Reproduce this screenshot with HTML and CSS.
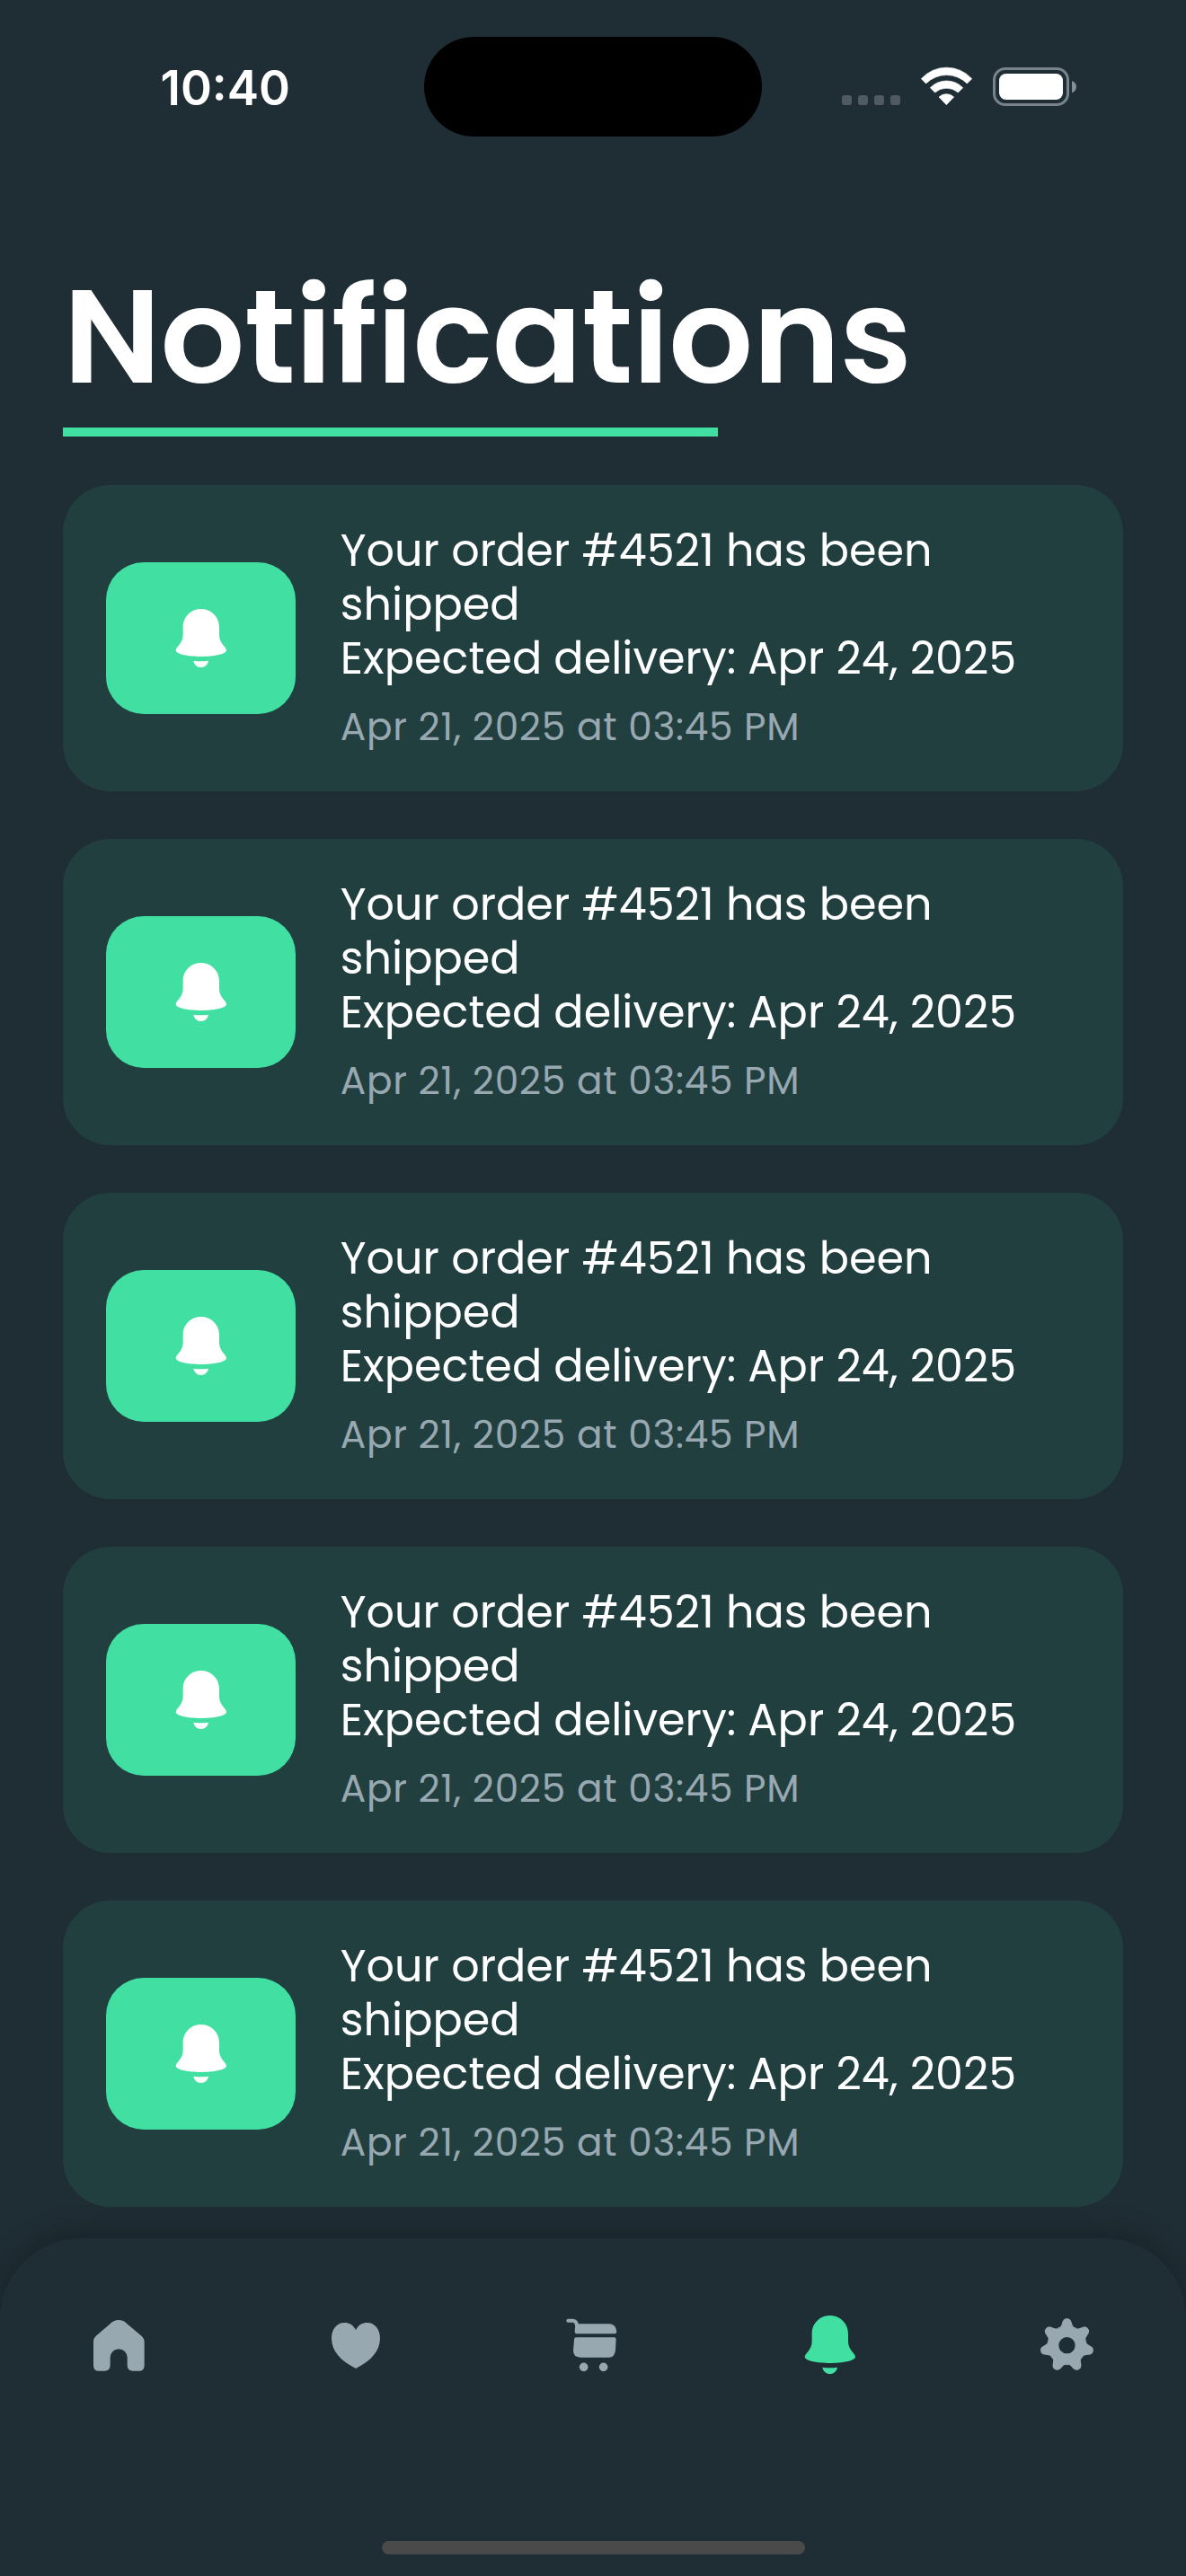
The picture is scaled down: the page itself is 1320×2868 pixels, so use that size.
FILE: index.html
```html
<!DOCTYPE html>
<html lang="en">
<head>
<meta charset="utf-8">
<title>Notifications</title>
<link rel="stylesheet" href="styles.css">
</head>
<body>
<svg class="sprite" aria-hidden="true">
  <symbol id="bell" viewBox="864 42 216 216">
    <path d="M971 54C938 54 911 80 911 114V138C911 152 908 160 901 170C894 180 887 185 887 193C889 206 930 213 971 213C1012 213 1054 206 1056 193C1056 185 1049 180 1042 170C1035 160 1032 152 1032 138V114C1032 80 1004 54 971 54Z"/>
    <path d="M946 227Q971 230 996 227C994 240 983 249 971 249C959 249 948 240 946 227Z"/>
  </symbol>
</svg>
<div class="screen">
  <header class="status">
    <div class="time">10:40</div>
    <div class="island"></div>
    <svg class="indicators" viewBox="0 0 900 210">
      <g fill="#4f5a62">
        <rect x="51" y="138" width="33" height="33" rx="10"/>
        <rect x="105" y="138" width="33" height="33" rx="10"/>
        <rect x="159" y="138" width="33" height="33" rx="10"/>
        <rect x="213" y="138" width="33" height="33" rx="10"/>
      </g>
      <g fill="#fff" stroke="#fff" stroke-width="2" stroke-linejoin="round">
        <path d="M316 83A114 114 0 0 1 485 83L469 99A97 97 0 0 0 332 99Z"/>
        <path d="M346 113A76 76 0 0 1 455 113L439 129A58 58 0 0 0 362 129Z"/>
        <path d="M375 144A36 36 0 0 1 425 144L400 170Z"/>
      </g>
      <rect x="559.5" y="49.5" width="246" height="120" rx="37" fill="none" stroke="#79838a" stroke-width="9"/>
      <rect x="576" y="66" width="213" height="87" rx="23" fill="#fff"/>
      <path d="M819 90C829 94 834 101 834 110C834 119 829 126 819 130Z" fill="#858e94"/>
    </svg>
  </header>

  <main class="content">
    <h1 class="title">Notifications</h1>
    <div class="rule"></div>
    <section class="list">
      <article class="card">
        <div class="badge"><svg class="icon"><use href="#bell"/></svg></div>
        <div class="body"><p class="message">Your order #4521 has been shipped<br>Expected delivery: Apr 24, 2025</p><time class="date">Apr 21, 2025 at 03:45 PM</time></div>
      </article>
      <article class="card">
        <div class="badge"><svg class="icon"><use href="#bell"/></svg></div>
        <div class="body"><p class="message">Your order #4521 has been shipped<br>Expected delivery: Apr 24, 2025</p><time class="date">Apr 21, 2025 at 03:45 PM</time></div>
      </article>
      <article class="card">
        <div class="badge"><svg class="icon"><use href="#bell"/></svg></div>
        <div class="body"><p class="message">Your order #4521 has been shipped<br>Expected delivery: Apr 24, 2025</p><time class="date">Apr 21, 2025 at 03:45 PM</time></div>
      </article>
      <article class="card">
        <div class="badge"><svg class="icon"><use href="#bell"/></svg></div>
        <div class="body"><p class="message">Your order #4521 has been shipped<br>Expected delivery: Apr 24, 2025</p><time class="date">Apr 21, 2025 at 03:45 PM</time></div>
      </article>
      <article class="card">
        <div class="badge"><svg class="icon"><use href="#bell"/></svg></div>
        <div class="body"><p class="message">Your order #4521 has been shipped<br>Expected delivery: Apr 24, 2025</p><time class="date">Apr 21, 2025 at 03:45 PM</time></div>
      </article>
    </section>
  </main>

  <nav class="tabs">
    <div class="tab-row">
      <a class="tab"><svg class="icon" viewBox="48 42 216 216"><path d="M140 73Q156 65 173 73Q178 76 186 83L230 120Q242 130 242 143V221Q242 239 224 239H204Q185 239 185 220V194A28.5 28.5 0 0 0 128 194V220Q128 239 109 239H90Q72 239 72 221V143Q71 130 83 120L126 83Q134 76 140 73Z"/></svg></a>
      <a class="tab"><svg class="icon" viewBox="840 42 216 216"><path d="M948 102C958 84 970 78 986 78C1012 78 1029 101 1029 130C1029 172 1000 205 948 231C896 205 867 172 867 130C867 101 884 78 910 78C926 78 938 84 948 102Z"/></svg></a>
      <a class="tab"><svg class="icon" viewBox="72 42 216 216">
        <path d="M97 71.500H112Q124 72 126 85" fill="none" stroke="currentColor" stroke-width="12" stroke-linecap="round"/>
        <path d="M121 82H236Q257 84 259 108Q259 115 252 115H127Q119 115 119 108Z"/>
        <path d="M124 127H251Q257 127 257 134L255 170Q252 194 233 194H139Q114 194 114 172L117 134Q117 127 124 127Z"/>
        <circle cx="149" cy="226" r="14.500"/><circle cx="215" cy="226" r="14.500"/></svg></a>
      <a class="tab active"><svg class="icon"><use href="#bell"/></svg></a>
      <a class="tab"><svg class="icon" viewBox="66 42 216 216"><g transform="translate(172.500 153.500)">
        <circle r="44" fill="none" stroke="currentColor" stroke-width="33"/>
        <path id="tooth" d="M-29 -60C-22 -59 -19 -65 -17 -72C-14 -83 -11 -90 0 -90C11 -90 14 -83 17 -72C19 -65 22 -59 29 -60L22 -45H-22Z"/>
        <use href="#tooth" transform="rotate(51.430)"/><use href="#tooth" transform="rotate(102.860)"/><use href="#tooth" transform="rotate(154.290)"/>
        <use href="#tooth" transform="rotate(205.710)"/><use href="#tooth" transform="rotate(257.140)"/><use href="#tooth" transform="rotate(308.570)"/>
      </g></svg></a>
    </div>
    <div class="home-indicator"></div>
  </nav>
</div>
</body>
</html>
```
FILE: styles.css
```css
* { box-sizing: border-box; margin: 0; padding: 0; }
body { background: #1f2d34; color: #fff; font-family: Poppins, Inter, sans-serif; }
.sprite { display: block; width: 0; height: 0; }
.screen { width: 1320px; height: 2868px; display: flex; flex-direction: column; overflow: hidden; background: #1f2d34; }

.status { height: 290px; flex: none; display: flex; align-items: flex-start; }
.time { width: 472px; padding: 66px 0 0 178.5px; font: 600 53px/64px Inter, sans-serif; }
.island { width: 376px; height: 111px; margin-top: 41px; border-radius: 56px; background: #000; }
.indicators { width: 300px; height: 70px; margin: 60px 0 0 72px; }

.content { flex: 1; min-height: 0; padding: 0 70.4px; }
.title { font-size: 147.84px; line-height: 170px; font-weight: 600; letter-spacing: -0.75px; white-space: nowrap; }
.rule { width: 729px; height: 9.4px; margin-top: 16.3px; background: #41dfa1; }

.list { display: flex; flex-direction: column; gap: 53px; padding-top: 54.3px; }
.card { flex: none; height: 341px; display: flex; align-items: center; gap: 49.4px; padding: 0 48px; border-radius: 53px; background: #223f40; }
.badge { width: 211px; height: 169px; flex: none; display: flex; align-items: center; justify-content: center; border-radius: 42px; background: #41dfa1; }
.icon { width: 72px; height: 72px; display: block; fill: currentColor; }
.body { flex: 1; display: flex; flex-direction: column; gap: 19.2px; }
.message { font-size: 49.28px; line-height: 60px; }
.date { font-size: 42.24px; line-height: 56.4px; letter-spacing: 0.68px; color: #98a8b0; }

.tabs { flex: none; height: 376px; display: flex; flex-direction: column; justify-content: space-between; align-items: center; padding: 82px 0 24px; border-radius: 90px 90px 0 0; background: #1f2d34; box-shadow: 0 -6px 32px rgba(0, 0, 0, 0.22); }
.tab-row { width: 100%; display: grid; grid-template-columns: repeat(5, 1fr); justify-items: center; }
.tab { color: #98a8b0; }
.tab.active { color: #41dfa1; }
.home-indicator { width: 471px; height: 15px; border-radius: 8px; background: #4a4a4a; }
```
